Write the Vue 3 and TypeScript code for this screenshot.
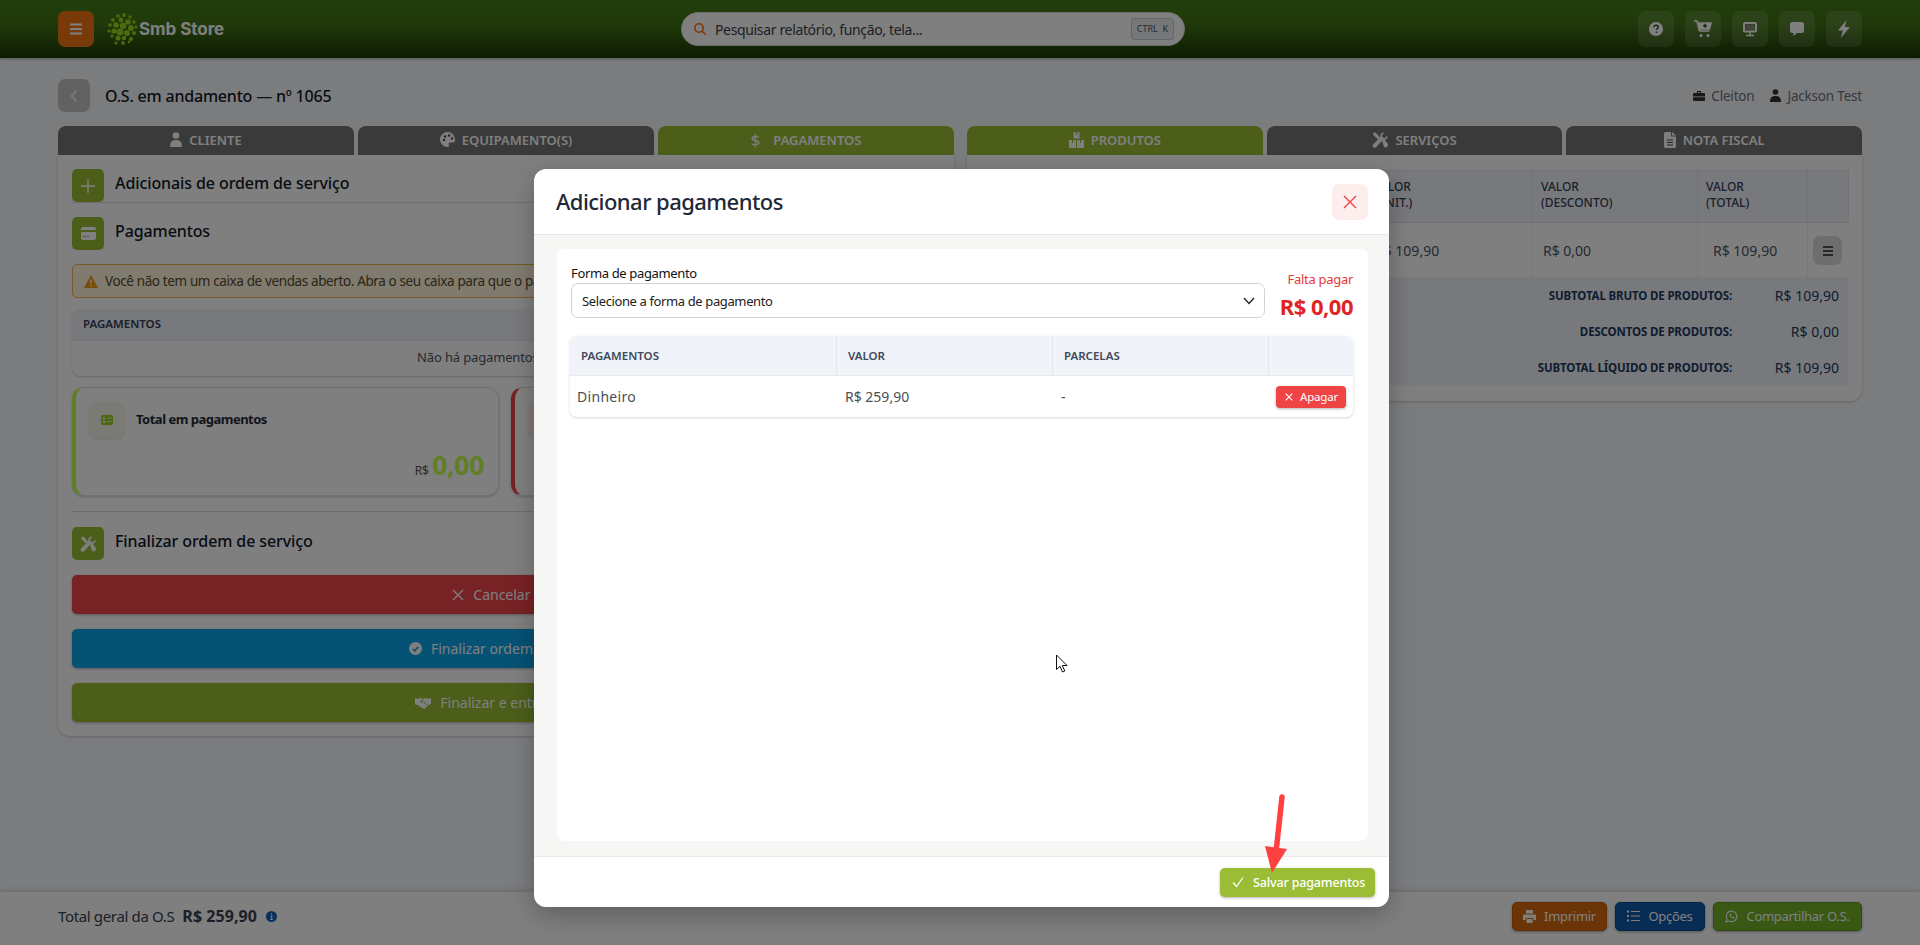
<script setup lang="ts">
const logoDots: [number, number, number][] = [
  [123, 16, 1.9], [117, 17, 1.8], [129, 18, 1.7], [112, 21, 1.9], [120, 21, 2.4], [127, 23, 2.8], [133, 23, 1.7],
  [109, 26, 1.8], [115, 26, 2.8], [122, 27, 3.2], [130, 29, 2.9], [135, 28, 1.5], [108, 32, 1.6], [113, 32, 2.6],
  [119, 33, 3.5], [126, 34, 3], [133, 34, 2.1], [111, 37, 1.6], [117, 39, 2.6], [123, 39, 2.2], [130, 40, 2],
  [115, 44, 1.6], [122, 44, 1.9], [128, 43, 1.3]
]
const headCols = ['VALOR<br>(UNIT.)', 'VALOR<br>(DESCONTO)', 'VALOR<br>(TOTAL)']
const subtotals = [
  { label: 'SUBTOTAL BRUTO DE PRODUTOS:', value: 'R$ 109,90' },
  { label: 'DESCONTOS DE PRODUTOS:', value: 'R$ 0,00' },
  { label: 'SUBTOTAL LÍQUIDO DE PRODUTOS:', value: 'R$ 109,90' }
]
</script>

<template>
  <div class="page">
    <header class="topbar">
      <button class="menu-btn" type="button">
        <svg width="14" height="14" viewBox="0 0 14 14"><path d="M1 2.500h12M1 7h12M1 11.500h12" stroke="#fff" stroke-width="2" /></svg>
      </button>
      <div class="logo">
        <svg class="logo-mark" width="32" height="34" viewBox="106 13 32 34">
          <circle v-for="(d, i) in logoDots" :key="i" :cx="d[0]" :cy="d[1]" :r="d[2]" fill="#98d41c" />
        </svg>
        <span class="logo-text">Smb Store</span>
      </div>
      <div class="search">
        <svg width="14" height="14" viewBox="0 0 14 14" fill="none"><circle cx="6" cy="6" r="4.200" stroke="#f07010" stroke-width="1.600" /><path d="M9.200 9.200l3.600 3.600" stroke="#f07010" stroke-width="1.600" /></svg>
        <span class="search-text">Pesquisar relatório, função, tela...</span>
        <kbd class="kbd">CTRL&nbsp; K</kbd>
      </div>
      <div class="top-icons">
        <button class="top-icon" type="button">
          <svg width="16" height="16" viewBox="0 0 16 16"><circle cx="8" cy="8" r="7" fill="#fff" /><path d="M5.900 6.200C6 4.800 7 4.200 8.100 4.200c1.200 0 2.100.7 2.100 1.800 0 1.500-1.700 1.500-1.700 2.900M8.400 10.600v1.300" fill="none" stroke="#385015" stroke-width="1.500" /></svg>
        </button>
        <button class="top-icon" type="button">
          <svg width="18" height="18" viewBox="0 0 18 18"><path d="M0 1h3l2.500 10h10M5 3h12l-1.500 6H6.500z" fill="none" stroke="#fff" stroke-width="1.600" /><path d="M5 3h12l-1.500 6H6.500z" fill="#fff" /><path d="M11 3.800v4M9 5.800h4" stroke="#385015" stroke-width="1.400" /><circle cx="7" cy="15.500" r="1.500" fill="#fff" /><circle cx="14" cy="15.500" r="1.500" fill="#fff" /></svg>
        </button>
        <button class="top-icon" type="button">
          <svg width="16" height="16" viewBox="0 0 16 16"><rect x="1.500" y="1.500" width="13" height="9.500" rx="1.200" fill="#fff" stroke="#fff" /><rect x="3" y="3" width="10" height="6.500" fill="#385015" /><rect x="3.200" y="3.200" width="9.600" height="6" fill="#cfcfcf" opacity=".5" /><path d="M8 11v3M4 14.500h8" stroke="#fff" stroke-width="1.500" /></svg>
        </button>
        <button class="top-icon" type="button">
          <svg width="16" height="16" viewBox="0 0 16 16"><path d="M3.500 1h9A2.500 2.500 0 0 1 15 3.500v6a2.500 2.500 0 0 1-2.500 2.500H8l-3.500 3V12h-1A2.500 2.500 0 0 1 1 9.500v-6A2.500 2.500 0 0 1 3.500 1z" fill="#fff" /></svg>
        </button>
        <button class="top-icon" type="button">
          <svg width="14" height="18" viewBox="0 0 14 18"><path d="M9.500 0L1 10.500h4.800L3.800 18 13 7H7.800z" fill="#fff" /></svg>
        </button>
      </div>
    </header>

    <main class="main">
      <div class="title-row">
        <button class="back-btn" type="button">
          <svg width="8" height="14" viewBox="0 0 8 14" fill="none"><path d="M6.500 1.500L1.500 7l5 5.500" stroke="#fff" stroke-width="1.500" /></svg>
        </button>
        <h1 class="page-title">O.S. em andamento — nº 1065</h1>
        <div class="people">
          <span class="person">
            <svg width="12" height="12" viewBox="0 0 12 12"><path d="M4 1h4v2h3a1 1 0 0 1 1 1v2.500H0V4a1 1 0 0 1 1-1h3zM5 2v1h2V2zM0 7.300h12V10a1 1 0 0 1-1 1H1a1 1 0 0 1-1-1z" fill="#333" /></svg>
            Cleiton
          </span>
          <span class="person">
            <svg width="11" height="13" viewBox="0 0 11 13"><circle cx="5.500" cy="3" r="2.800" fill="#333" /><path d="M0 13c0-4 1.500-6 5.500-6s5.500 2 5.500 6z" fill="#333" /></svg>
            Jackson Test
          </span>
        </div>
      </div>

      <div class="columns">
        <section class="col">
          <div class="tabs">
            <div class="tab">
              <svg width="12" height="15" viewBox="0 0 12 15"><circle cx="6" cy="3.500" r="3.300" fill="#fff" /><path d="M0 15c0-5 1.500-7 6-7s6 2 6 7z" fill="#fff" /></svg>
              CLIENTE
            </div>
            <div class="tab">
              <svg width="15" height="15" viewBox="0 0 15 15"><path d="M7.500 0a7.500 7.500 0 1 0 0 15c1.500 0 1.800-1 1.300-2-.6-1.100 0-2.500 1.500-2.500H13c1.300 0 2-1 2-2.500C15 3.300 11.700 0 7.500 0z" fill="#fff" /><circle cx="4" cy="8" r="1.200" fill="#444" /><circle cx="5" cy="4.500" r="1.200" fill="#444" /><circle cx="9" cy="3.500" r="1.200" fill="#444" /><circle cx="12" cy="6.500" r="1.200" fill="#444" /></svg>
              EQUIPAMENTO(S)
            </div>
            <div class="tab active">
              <span class="tab-dollar">$</span>
              PAGAMENTOS
            </div>
          </div>
          <div class="panel left-panel">
            <div class="section-head bordered">
              <span class="section-icon">
                <svg width="14" height="14" viewBox="0 0 14 14"><path d="M7 0v14M0 7h14" stroke="#fff" stroke-width="1.300" /></svg>
              </span>
              <h2>Adicionais de ordem de serviço</h2>
            </div>
            <div class="section-head second">
              <span class="section-icon">
                <svg width="15" height="13" viewBox="0 0 15 13"><rect width="15" height="13" rx="2" fill="#fff" /><rect y="3" width="15" height="2" fill="#98bc34" /><path d="M2 9.500h3M6 9.500h2" stroke="#98bc34" stroke-width="1.200" /></svg>
              </span>
              <h2>Pagamentos</h2>
            </div>
            <div class="warning">
              <svg width="14" height="13" viewBox="0 0 14 13"><path d="M7 0l7 13H0z" fill="#f09a10" /><path d="M7 4.500v4M7 10v1.500" stroke="#fff" stroke-width="1.300" /></svg>
              <span>Você não tem um caixa de vendas aberto. Abra o seu caixa para que o pagamento seja registrado.</span>
            </div>
            <div class="pay-table">
              <div class="pay-head">PAGAMENTOS</div>
              <div class="pay-empty">Não há pagamentos lançados</div>
            </div>
            <div class="cards">
              <div class="card green">
                <div class="card-top">
                  <span class="card-icon">
                    <svg width="12" height="10" viewBox="0 0 12 10"><rect width="12" height="10" rx="1.500" fill="#9bd21e" /><path d="M6.500 3h4M6.500 6.500h4" stroke="#eef4dd" stroke-width="1" /><circle cx="3" cy="3.500" r="1.200" fill="#eef4dd" /><rect x="1.500" y="5.800" width="3" height="2" fill="#eef4dd" /></svg>
                  </span>
                  <span class="card-title">Total em pagamentos</span>
                </div>
                <div class="card-value"><small>R$</small><b>0,00</b></div>
              </div>
              <div class="card red">
                <div class="card-top">
                  <span class="card-icon"></span>
                  <span class="card-title">Restante</span>
                </div>
                <div class="card-value"><small>R$</small><b>259,90</b></div>
              </div>
            </div>
            <div class="section-head third">
              <span class="section-icon">
                <svg width="16" height="16" viewBox="0 0 16 16"><path d="M1 1l2.500-.5 4.500 5-2 2-4.500-4.500zM10 9l2-2 4 5c.4 1-.6 3-2 3.500-.8.2-1.500 0-2-.7z" fill="#fff" /><path d="M15.500 3.500L13 6l-2.500-.5L10 3l2.500-2.500C10 0 7.500 2.500 8.500 5L1 12.500C.3 13.500.5 15 1.500 15.500c1 .5 2 .3 2.700-.5l7-7.500c2.500 1 5-1 4.300-4z" fill="#fff" /></svg>
              </span>
              <h2>Finalizar ordem de serviço</h2>
            </div>
            <button class="wide-btn danger" type="button">
              <svg width="12" height="12" viewBox="0 0 12 12"><path d="M1 1l10 10M11 1L1 11" stroke="#fff" stroke-width="1.300" /></svg>
              Cancelar O.S.
            </button>
            <button class="wide-btn info" type="button">
              <svg width="13" height="13" viewBox="0 0 13 13"><circle cx="6.500" cy="6.500" r="6.500" fill="#fff" /><path d="M3.800 6.800l2 2 3.500-4" fill="none" stroke="#0ca4e8" stroke-width="1.500" /></svg>
              Finalizar ordem de serviço
            </button>
            <button class="wide-btn success" type="button">
              <svg width="16" height="12" viewBox="0 0 16 12"><path d="M0 1l3 .8L6 1l2 1 2-1 3 .8L16 1v6l-2 .5L9.500 12 7 11 3 8 0 7.500z" fill="#fff" /><path d="M8 2L5.500 5c.8.800 2 .500 2.800-.5L12 8" fill="none" stroke="#98bc34" stroke-width="1" /></svg>
              Finalizar e entregar O.S.
            </button>
          </div>
        </section>

        <section class="col">
          <div class="tabs">
            <div class="tab active">
              <svg width="15" height="16" viewBox="0 0 15 16"><path d="M4.500 0h6v6.500h-6zM0 8h7v8H1a1 1 0 0 1-1-1zM8 8h7v7a1 1 0 0 1-1 1H8z" fill="#fff" /><path d="M7 0v2.500M8 0v2.500M3.500 8v3M11.500 8v3" stroke="#98bc34" stroke-width="1" /></svg>
              PRODUTOS
            </div>
            <div class="tab">
              <svg width="16" height="16" viewBox="0 0 16 16"><path d="M1 1l2.500-.5 4.500 5-2 2-4.500-4.500zM10 9l2-2 4 5c.4 1-.6 3-2 3.500-.8.2-1.500 0-2-.7z" fill="#fff" /><path d="M15.500 3.500L13 6l-2.500-.5L10 3l2.500-2.500C10 0 7.500 2.500 8.500 5L1 12.500C.3 13.500.5 15 1.500 15.500c1 .5 2 .3 2.700-.5l7-7.500c2.500 1 5-1 4.300-4z" fill="#fff" /></svg>
              SERVIÇOS
            </div>
            <div class="tab">
              <svg width="12" height="16" viewBox="0 0 12 16"><path d="M1.500 0H7v4.500h5V14.500a1.500 1.500 0 0 1-1.500 1.500h-9A1.500 1.500 0 0 1 0 14.500v-13A1.500 1.500 0 0 1 1.500 0zM8 0l4 3.500H8z" fill="#fff" /><path d="M3 8h6M3 10.500h6M3 13h6" stroke="#444" stroke-width="1" /></svg>
              NOTA FISCAL
            </div>
          </div>
          <div class="panel right-panel">
            <div class="prod-grid prod-head">
              <div class="prod-cell">PRODUTO</div>
              <div v-for="c in headCols" :key="c" class="prod-cell" v-html="c"></div>
              <div class="prod-cell"></div>
            </div>
            <div class="prod-grid prod-row">
              <div class="prod-cell"></div>
              <div class="prod-cell val">R$ 109,90</div>
              <div class="prod-cell val">R$ 0,00</div>
              <div class="prod-cell val indent">R$ 109,90</div>
              <div class="prod-cell menu-cell">
                <button class="row-menu" type="button">
                  <svg width="12" height="12" viewBox="0 0 12 12"><path d="M1 2h10M1 6h10M1 10h10" stroke="#222" stroke-width="1.500" /></svg>
                </button>
              </div>
            </div>
            <div class="subtotals">
              <div v-for="s in subtotals" :key="s.label" class="sub-row">
                <span class="sub-label">{{ s.label }}</span>
                <span class="sub-value">{{ s.value }}</span>
              </div>
            </div>
          </div>
        </section>
      </div>
    </main>

    <footer class="bottom">
      <span class="total-label">Total geral da O.S</span>
      <strong class="total-value">R$ 259,90</strong>
      <svg class="no-shrink" width="11" height="11" viewBox="0 0 11 11"><circle cx="5.500" cy="5.500" r="5.500" fill="#1060b8" /><path d="M5.500 2.300v1.300M4.300 5h1.400v3.500M4.200 8.500h2.700" stroke="#fff" stroke-width="1.200" fill="none" /></svg>
      <div class="bottom-actions">
        <button class="foot-btn orange" type="button">
          <svg class="no-shrink" width="13" height="13" viewBox="0 0 13 13"><path d="M3 0h7v3.500H3zM1 4.500h11a1 1 0 0 1 1 1V10h-2.500V8h-8v2H0V5.500a1 1 0 0 1 1-1zM3.500 9h6v4h-6z" fill="#fff" /></svg>
          Imprimir
        </button>
        <button class="foot-btn navy" type="button">
          <svg class="no-shrink" width="13" height="12" viewBox="0 0 13 12"><path d="M4 1.500h9M4 6h9M4 10.500h9" stroke="#fff" stroke-width="1.200" /><path d="M0 1.500h2M0 6h2M0 10.500h2" stroke="#fff" stroke-width="1.800" /></svg>
          Opções
        </button>
        <button class="foot-btn leaf" type="button">
          <svg class="no-shrink" width="13" height="13" viewBox="0 0 13 13" fill="none"><path d="M1 12l.9-3.200a5.300 5.300 0 1 1 2.200 2.200z" stroke="#fff" stroke-width="1.100" /><path d="M4.500 4c0 2.500 2 4.500 4.500 4.800l.6-1.300-1.400-.7-.6.600c-.8-.4-1.300-1-1.600-1.700l.6-.6L6 3.700z" fill="#fff" /></svg>
          Compartilhar O.S.
        </button>
      </div>
    </footer>

    <div class="overlay">
      <div class="modal">
        <div class="modal-head">
          <h3>Adicionar pagamentos</h3>
          <button class="close-btn" type="button">
            <svg width="14" height="14" viewBox="0 0 14 14"><path d="M1 1l12 12M13 1L1 13" stroke="#ef4444" stroke-width="1.400" /></svg>
          </button>
        </div>
        <div class="modal-body">
          <div class="modal-card">
            <div class="form-row">
              <div class="field">
                <label class="field-label">Forma de pagamento</label>
                <div class="select">
                  <span>Selecione a forma de pagamento</span>
                  <svg width="12" height="8" viewBox="0 0 12 8" fill="none"><path d="M1 1l5 5.500L11 1" stroke="#222" stroke-width="1.300" /></svg>
                </div>
              </div>
              <div class="missing">
                <span class="missing-label">Falta pagar</span>
                <strong class="missing-value">R$ 0,00</strong>
              </div>
            </div>
            <div class="m-table">
              <div class="m-grid m-head">
                <div class="m-th">PAGAMENTOS</div>
                <div class="m-th">VALOR</div>
                <div class="m-th">PARCELAS</div>
                <div class="m-th"></div>
              </div>
              <div class="m-grid m-row">
                <div class="m-td first">Dinheiro</div>
                <div class="m-td">R$ 259,90</div>
                <div class="m-td">-</div>
                <div class="m-td action">
                  <button class="del-btn" type="button">
                    <svg width="8" height="8" viewBox="0 0 8 8"><path d="M.7.7l6.600 6.600M7.300.7L.7 7.300" stroke="#fff" stroke-width="1.100" /></svg>
                    Apagar
                  </button>
                </div>
              </div>
            </div>
          </div>
        </div>
        <div class="modal-foot">
          <button class="save-btn" type="button">
            <svg width="12" height="12" viewBox="0 0 12 12" fill="none"><path d="M1 6.500l3.500 4L11 1.500" stroke="#fff" stroke-width="1.200" /></svg>
            Salvar pagamentos
          </button>
        </div>
      </div>
    </div>

    <svg class="arrow" width="40" height="90" viewBox="0 0 40 90">
      <path d="M27 7L21 62" stroke="#ff4040" stroke-width="5.500" stroke-linecap="round" fill="none" />
      <path d="M10 56L32 59L17 83z" fill="#ff4040" />
    </svg>
    <svg class="cursor" width="14" height="20" viewBox="0 0 14 20">
      <path d="M1.500 1v14.500l3.500-3.200 2.500 5.700 2.300-1-2.500-5.500h4.700z" fill="#fff" stroke="#111" stroke-width="1" />
    </svg>
  </div>
</template>

<style scoped>
.page {
  --ui: "Noto Sans", "Open Sans", sans-serif;
  position: relative;
  display: flex;
  flex-direction: column;
  height: 945px;
  overflow: hidden;
  background: #f6f8fc;
  font-family: var(--ui);
  color: #1f2937;
}
button { font-family: inherit; border: 0; padding: 0; cursor: pointer; }
h1, h2, h3 { margin: 0; }
.no-shrink { flex: none; }

.topbar {
  display: flex;
  align-items: center;
  height: 58px;
  flex: none;
  padding: 0 58px;
  background: linear-gradient(#467e18 0%, #3f7014 45%, #1a3606 100%);
  box-shadow: 0 1px 3px rgba(0, 0, 0, .3);
}
.menu-btn {
  display: flex; align-items: center; justify-content: center;
  width: 36px; height: 36px;
  border-radius: 7px;
  background: #f07510;
}
.logo { display: flex; align-items: center; margin-left: 13px; width: 574px; }
.logo-text { font-family: "Inter", sans-serif; font-weight: 700; font-size: 17px; color: #fff; letter-spacing: -.05px; }
.search {
  display: flex; align-items: center;
  width: 504px; height: 34px;
  padding: 0 10px 0 11px;
  box-sizing: border-box;
  border-radius: 17px;
  background: #fff;
  border: 1px solid #d8d8d8;
}
.search-text { margin-left: 8px; font-size: 14px; color: #3a3f47; flex: 1; letter-spacing: -.35px; }
.kbd {
  font-family: var(--ui);
  font-size: 9px; color: #4a5568;
  height: 22px; line-height: 20px; box-sizing: border-box;
  padding: 0 5px;
  border: 1px solid #c8ccd2; border-radius: 3px;
  background: #eceef1;
}
.top-icons { display: flex; gap: 11px; margin-left: auto; }
.top-icon {
  display: flex; align-items: center; justify-content: center;
  width: 36px; height: 36px;
  border-radius: 7px;
  background: rgba(255, 255, 255, .12);
}

.main { padding: 21px 58px 0; flex: 1; }
.title-row { display: flex; align-items: center; height: 33px; }
.back-btn {
  display: flex; align-items: center; justify-content: center;
  width: 32px; height: 33px;
  border-radius: 7px;
  background: #c4c4c4;
}
.page-title { margin-left: 15px; font-size: 16px; font-weight: 500; color: #111827; letter-spacing: -.2px; }
.people { margin-left: auto; display: flex; gap: 16px; font-size: 13.500px; color: #6b7280; letter-spacing: -.2px; }
.person { display: flex; align-items: center; gap: 6px; }

.columns { display: grid; grid-template-columns: 896px 895px; gap: 13px; margin-top: 14px; }
.tabs { display: flex; gap: 4px; }
.tab {
  flex: 1;
  display: flex; align-items: center; justify-content: center; gap: 7px;
  height: 29px;
  padding-bottom: 2px;
  box-sizing: border-box;
  border-radius: 8px 8px 0 0;
  background: #747474;
  color: #fff;
  font-size: 13px; font-weight: 600;
}
.tab.active { background: #98bc34; }
.tab-dollar { font-size: 17px; font-weight: 400; margin-right: 6px; }
.panel {
  background: #fff;
  border-radius: 0 0 12px 12px;
  box-shadow: 0 1px 3px rgba(0, 0, 0, .18);
  box-sizing: border-box;
  padding: 14px;
}
.left-panel { height: 581px; }
.right-panel { height: 246px; }

.section-head { display: flex; align-items: center; gap: 11px; height: 33px; }
.section-head h2 { font-size: 16px; font-weight: 500; color: #111827; margin-top: -5px; letter-spacing: -.1px; }
.section-head.bordered { border-bottom: 1px solid #ddd; box-sizing: content-box; }
.section-head.second { margin-top: 14px; }
.section-head.third { margin-top: 15px; padding-top: 15px; border-top: 1px solid #ddd; box-sizing: content-box; }
.section-icon {
  display: flex; align-items: center; justify-content: center;
  width: 32px; height: 33px;
  border-radius: 5px;
  background: #98bc34;
  flex: none;
}
.warning {
  display: flex; align-items: center; gap: 7px;
  height: 34px;
  margin-top: 14px;
  padding: 0 11px;
  box-sizing: border-box;
  overflow: hidden;
  white-space: nowrap;
  border: 1px solid #f0b44c;
  border-radius: 5px;
  background: #fff6de;
  font-size: 13.500px;
  letter-spacing: -.38px;
  color: #5b4a2a;
}
.pay-table {
  margin-top: 11px;
  height: 67px;
  border-radius: 8px;
  background: #fff;
  box-shadow: 0 1px 2px rgba(0, 0, 0, .2);
  overflow: hidden;
}
.pay-head {
  height: 31px; line-height: 29px;
  padding-left: 11px;
  background: #f0f3f8;
  border-bottom: 1px solid #e4e6ea;
  font-size: 11.500px; font-weight: 600; color: #34415a;
}
.pay-empty { text-align: center; font-size: 13px; line-height: 33px; color: #4b5563; letter-spacing: -.15px; }
.cards { display: grid; grid-template-columns: 427px 429px; gap: 12px; margin-top: 11px; }
.card {
  position: relative;
  height: 109px;
  box-sizing: border-box;
  border-radius: 12px;
  border: 1px solid #e3e3e3;
  border-left-width: 4px;
  background: #fff;
  box-shadow: 0 1px 3px rgba(0, 0, 0, .2);
  padding: 14px 14px 0 13px;
}
.card.green { border-left-color: #c0ff48; }
.card.red { border-left-color: #ef4444; }
.card-top { display: flex; align-items: center; gap: 11px; }
.card-icon {
  display: flex; align-items: center; justify-content: center;
  width: 36px; height: 36px;
  border-radius: 7px;
  background: #f4f7ea;
  box-shadow: 0 1px 2px rgba(0, 0, 0, .12);
}
.card.red .card-icon { background: #fdeeee; }
.card-title { font-size: 13px; font-weight: 700; color: #1f2937; letter-spacing: -.5px; margin-top: -2px; }
.card-value { display: flex; justify-content: flex-end; align-items: baseline; gap: 3px; margin-top: 9px; }
.card-value small { font-size: 12px; color: #4b5563; }
.card-value b { font-size: 27px; line-height: 36px; font-weight: 700; color: #c0ff48; letter-spacing: -.5px; }
.card.red .card-value b { color: #ef4444; }
.wide-btn {
  display: flex; align-items: center; justify-content: center; gap: 9px;
  width: 100%; height: 39px;
  margin-top: 15px;
  border-radius: 5px;
  color: #fff;
  font-size: 14px;
  box-shadow: 0 1px 3px rgba(0, 0, 0, .3);
}
.danger { background: #ef4449; }
.info { background: #0ca4e8; }
.success { background: #98bc34; }

.prod-grid { display: grid; grid-template-columns: 384px 168px 165px 110px 41px; }
.prod-head { height: 53px; background: #f0f3f8; border-bottom: 1px solid #e2e4e8; }
.prod-head .prod-cell {
  padding: 10px 8px;
  font-size: 12px; line-height: 16px; font-weight: 500; color: #34415a;
  border-right: 1px solid #e4e6ea;
}
.prod-row { height: 55px; }
.prod-row .prod-cell {
  display: flex; align-items: center;
  padding-left: 10px;
  font-size: 14px; color: #4b5563;
  border-right: 1px solid #eceef1;
}
.prod-row .prod-cell.indent { padding-left: 15px; }
.prod-row .menu-cell { padding-left: 5px; border-right: 0; }
.row-menu {
  display: flex; align-items: center; justify-content: center;
  width: 29px; height: 29px;
  border-radius: 7px;
  background: #dcdcdc;
}
.subtotals { background: #f0f3f8; height: 109px; margin-top: -1px; }
.sub-row { display: flex; justify-content: flex-end; align-items: center; height: 36px; padding-right: 9px; }
.sub-label { font-size: 11.500px; font-weight: 700; color: #1e3a5f; letter-spacing: -.15px; }
.sub-value { width: 107px; text-align: right; font-size: 14px; color: #1e3a5f; }

.bottom {
  display: flex; align-items: center; gap: 9px;
  height: 53px;
  flex: none;
  box-sizing: border-box;
  padding: 0 58px 5px;
  background: #fff;
  box-shadow: 0 -2px 5px rgba(0, 0, 0, .12);
}
.total-label { font-size: 15px; color: #374151; letter-spacing: -.35px; }
.total-value { font-size: 16px; font-weight: 700; color: #374151; letter-spacing: .05px; margin-left: -1px; }
.bottom-actions { margin-left: auto; display: flex; gap: 8px; }
.foot-btn {
  display: flex; align-items: center; justify-content: center; gap: 8px;
  height: 29px;
  border-radius: 5px;
  color: #fff;
  font-size: 13px;
  letter-spacing: -.3px;
  white-space: nowrap;
  box-sizing: border-box;
  box-shadow: 0 1px 3px rgba(0, 0, 0, .35);
}
.orange { background: #d96a10; border: 1px solid #c05a08; width: 95px; }
.navy { background: #0f5aa8; border: 1px solid #0a4a90; width: 90px; }
.leaf { background: #72b028; border: 1px solid #5a9618; width: 149px; }

.overlay {
  position: absolute; inset: 0;
  display: flex; justify-content: center;
  box-sizing: border-box;
  padding: 169px 0 0 3px;
  background: rgba(0, 0, 0, .5);
}
.modal {
  display: flex; flex-direction: column;
  width: 855px; height: 738px;
  border-radius: 12px;
  background: #fff;
  overflow: hidden;
  box-shadow: 0 8px 24px rgba(0, 0, 0, .25);
}
.modal-head {
  display: flex; align-items: center; justify-content: space-between;
  height: 65px;
  flex: none;
  padding: 0 21px 0 22px;
  border-bottom: 1px solid #e9e9e9;
}
.modal-head h3 { font-size: 22px; font-weight: 500; color: #1f2937; letter-spacing: -.55px; margin-top: -2px; }
.close-btn {
  display: flex; align-items: center; justify-content: center;
  width: 36px; height: 36px;
  border-radius: 7px;
  background: #fdeeee;
}
.modal-body {
  flex: 1;
  box-sizing: border-box;
  padding: 14px 21px 15px 23px;
  background: #f6f6f4;
  border-bottom: 1px solid #eaeaea;
}
.modal-card {
  height: 100%;
  box-sizing: border-box;
  padding: 15px 15px 0 14px;
  border-radius: 7px;
  background: #fff;
}
.form-row { display: flex; gap: 15px; }
.field { flex: 1; }
.field-label { display: block; font-size: 13px; line-height: 18px; color: #111; letter-spacing: -.35px; }
.select {
  display: flex; align-items: center; justify-content: space-between;
  height: 35px;
  margin-top: 1px;
  padding: 0 9px 0 10px;
  box-sizing: border-box;
  border: 1px solid #cfd3d9;
  border-radius: 7px;
  font-size: 13px;
  letter-spacing: -.38px;
  color: #222;
}
.missing { display: flex; flex-direction: column; align-items: flex-end; padding-top: 6px; }
.missing-label { font-size: 13px; line-height: 18px; color: #e53935; letter-spacing: -.3px; }
.missing-value { font-size: 22px; line-height: 30px; margin-top: 3px; font-weight: 700; color: #e02424; letter-spacing: -.5px; }
.m-table {
  margin-top: 15px; margin-left: -1px;
  border-radius: 7px;
  overflow: hidden;
  box-shadow: 0 1px 3px rgba(0, 0, 0, .16);
}
.m-grid { display: grid; grid-template-columns: 267px 216px 216px 1fr; }
.m-head { height: 40px; background: #f0f3f8; border-bottom: 1px solid #e6e8ec; box-sizing: border-box; }
.m-th {
  display: flex; align-items: center;
  padding-left: 11px;
  font-size: 11.500px; font-weight: 600; color: #3f4a5c;
  border-right: 1px solid #e4e7ec;
}
.m-th:last-child { border-right: 0; }
.m-row { height: 41px; align-items: center; }
.m-td { padding-left: 8px; font-size: 14px; color: #4b4f55; }
.m-td.first { padding-left: 7px; letter-spacing: .3px; }
.m-td.action { display: flex; justify-content: flex-end; padding: 0 7px 0 0; }
.del-btn {
  display: flex; align-items: center; gap: 7px;
  width: 70px; height: 22px;
  padding-left: 9px;
  box-sizing: border-box;
  border-radius: 4px;
  background: #ef4444;
  color: #fff;
  font-size: 11.500px;
  letter-spacing: -.2px;
  box-shadow: 0 1px 3px rgba(0, 0, 0, .3);
}
.modal-foot {
  display: flex; justify-content: flex-end; align-items: center;
  height: 50px;
  flex: none;
  padding: 0 14px 0 0;
}
.save-btn {
  display: flex; align-items: center; gap: 9px;
  width: 155px; height: 29px;
  padding-left: 12px;
  box-sizing: border-box;
  border-radius: 5px;
  background: #9bbd35;
  color: #fff;
  font-size: 12.500px;
  font-weight: 500;
  letter-spacing: -.15px;
  box-shadow: 0 1px 3px rgba(0, 0, 0, .3);
}
.arrow { position: absolute; left: 1255px; top: 790px; }
.cursor { position: absolute; left: 1055px; top: 654px; }
</style>

<style>
html, body { margin: 0; overflow: hidden; }
</style>
